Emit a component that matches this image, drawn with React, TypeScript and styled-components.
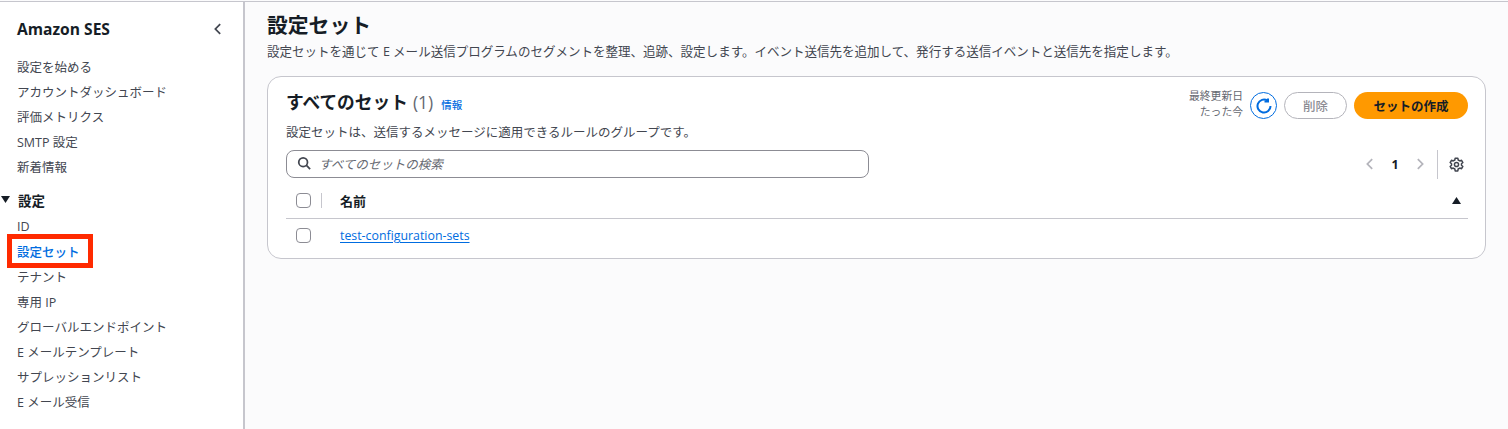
import React from 'react';
import styled, { createGlobalStyle } from 'styled-components';

const FONT = `"Open Sans", "Noto Sans CJK JP", sans-serif`;

const GlobalStyle = createGlobalStyle`
  html, body {
    margin: 0;
    padding: 0;
    height: 100%;
    overflow: hidden;
    background: #fbfbfc;
  }
  #root {
    height: 100%;
  }
  * {
    box-sizing: border-box;
  }
`;

const Page = styled.div`
  display: flex;
  height: 429px;
  border-top: 1px solid #c6c6cd;
  margin-top: 1px;
  font-family: ${FONT};
  color: #424650;
  background: #fbfbfc;
`;

const Sidebar = styled.aside`
  flex: 0 0 245px;
  background: #ffffff;
  border-right: 2px solid #c6c6cd;
  overflow: hidden;
`;

const SidebarHeader = styled.div`
  display: flex;
  align-items: center;
  justify-content: space-between;
  height: 22px;
  margin-top: 16px;
  padding: 0 18px 0 17px;
  color: #424650;
`;

const ServiceName = styled.span`
  font-size: 15.6px;
  font-weight: 700;
  color: #161d26;
`;

const NavList = styled.ul`
  list-style: none;
  margin: 0;
  padding: 0 0 0 17px;
`;

const TopNav = styled(NavList)`
  margin-top: 13.5px;
`;

const NavItem = styled.li<{ $active?: boolean }>`
  position: relative;
  display: flex;
  align-items: center;
  height: 25.1px;
  font-size: 12.5px;
  font-weight: ${(p) => (p.$active ? 500 : 400)};
  color: ${(p) => (p.$active ? '#006ce0' : '#424650')};
  white-space: nowrap;
`;

const Highlight = styled.span`
  position: absolute;
  left: -10px;
  top: -5px;
  width: 86px;
  height: 34px;
  border: 5px solid #ff2a00;
`;

const SectionTitle = styled.div`
  display: flex;
  align-items: center;
  height: 25px;
  margin: 8.5px 0 1px;
  padding-left: 1px;
  font-size: 13.5px;
  font-weight: 700;
  color: #161d26;
`;

const Caret = styled.svg`
  width: 9px;
  height: 7px;
  margin-right: 8px;
  fill: #161d26;
`;

const Main = styled.main`
  flex: 1;
  min-width: 0;
  padding: 8px 22px 0 22px;
`;

const PageTitle = styled.h1`
  margin: 0;
  font-size: 20.8px;
  line-height: 30px;
  font-weight: 700;
  color: #161d26;
`;

const PageDescription = styled.p`
  margin: 3px 0 0;
  font-size: 12.53px;
  line-height: 18px;
  color: #424650;
  white-space: nowrap;
`;

const Card = styled.section`
  margin-top: 15px;
  height: 183px;
  padding: 14px 17px 0 18px;
  background: #ffffff;
  border: 1px solid #c6c6cd;
  border-radius: 14px;
`;

const CardTop = styled.div`
  display: flex;
  justify-content: space-between;
  align-items: flex-start;
`;

const CardTitle = styled.h2`
  margin: -1px 0 0;
  display: flex;
  align-items: baseline;
  gap: 5px;
  font-size: 17.7px;
  line-height: 24px;
  font-weight: 700;
  color: #161d26;
`;

const Count = styled.span`
  font-size: 17.5px;
  font-weight: 400;
  color: #656871;
`;

const InfoLink = styled.a`
  margin-left: 3px;
  font-size: 10.5px;
  font-weight: 500;
  color: #006ce0;
`;

const Actions = styled.div`
  display: flex;
  align-items: center;
  gap: 7px;
`;

const Updated = styled.div`
  margin-top: -3px;
  font-size: 10.8px;
  line-height: 16px;
  text-align: right;
  color: #656871;
`;

const RefreshButton = styled.button`
  display: flex;
  align-items: center;
  justify-content: center;
  width: 27px;
  height: 27px;
  padding: 0;
  background: #ffffff;
  border: 1px solid #006ce0;
  border-radius: 50%;
  color: #006ce0;
`;

const PillButton = styled.button<{ $primary?: boolean }>`
  height: 27px;
  padding: 0;
  width: ${(p) => (p.$primary ? '114px' : '63px')};
  font-family: ${FONT};
  font-size: 12.5px;
  font-weight: ${(p) => (p.$primary ? 700 : 500)};
  color: ${(p) => (p.$primary ? '#161d26' : '#8c8c94')};
  background: ${(p) => (p.$primary ? '#ff9900' : '#ffffff')};
  border: ${(p) => (p.$primary ? 'none' : '1px solid #b4b4bb')};
  border-radius: 14px;
`;

const Subtitle = styled.p`
  margin: 4px 0 0;
  font-size: 12.5px;
  line-height: 17px;
  color: #424650;
`;

const ToolRow = styled.div`
  display: flex;
  align-items: center;
  justify-content: space-between;
  margin-top: 9px;
`;

const SearchBox = styled.div`
  display: flex;
  align-items: center;
  gap: 8px;
  width: 583px;
  height: 28px;
  padding: 0 0 2px 10px;
  border: 1px solid #8c8c94;
  border-radius: 8px;
  font-size: 12.5px;
  font-style: italic;
  color: #656871;
`;

const Pager = styled.div`
  display: flex;
  align-items: center;
  height: 28px;
  color: #b4b4bb;
`;

const PageNumber = styled.span`
  width: 36px;
  text-align: center;
  font-size: 12.5px;
  font-weight: 700;
  color: #161d26;
`;

const PagerDivider = styled.span`
  width: 1px;
  height: 29px;
  margin: 0 11px 0 10px;
  background: #c6c6cd;
`;

const GearIcon = styled.svg`
  display: block;
  margin-right: 4px;
  color: #424650;
`;

const HeadRow = styled.div`
  display: flex;
  align-items: center;
  height: 41px;
  padding: 5px 0 0 10px;
  border-bottom: 1px solid #c6c6cd;
`;

const BodyRow = styled.div`
  display: flex;
  align-items: center;
  height: 33px;
  padding-left: 10px;
`;

const Checkbox = styled.span`
  flex: none;
  width: 15px;
  height: 15px;
  background: #ffffff;
  border: 1px solid #8c8c94;
  border-radius: 4px;
`;

const HeadDivider = styled.span`
  width: 1px;
  height: 15px;
  margin-left: 10px;
  background: #c6c6cd;
`;

const ColumnName = styled.span`
  flex: 1;
  margin-left: 18px;
  font-size: 13px;
  font-weight: 700;
  color: #161d26;
`;

const SortCaret = styled.svg`
  width: 9px;
  height: 7px;
  margin-right: 7px;
  fill: #161d26;
`;

const RowLink = styled.a`
  margin-left: 29px;
  font-size: 12.35px;
  font-weight: 500;
  color: #006ce0;
  text-decoration: underline;
  text-underline-offset: 2px;
`;

const topNav = ['設定を始める', 'アカウントダッシュボード', '評価メトリクス', 'SMTP 設定', '新着情報'];
const settingsNav = ['ID', '設定セット', 'テナント', '専用 IP', 'グローバルエンドポイント', 'E メールテンプレート', 'サプレッションリスト', 'E メール受信'];

const Chevron = ({ dir, size = 14 }: { dir: 'left' | 'right'; size?: number }) => (
  <svg width={size} height={size} viewBox="0 0 16 16" fill="none" stroke="currentColor" strokeWidth={2} style={{ display: 'block' }}>
    <path d={dir === 'left' ? 'M10.5 2.5 5 8l5.5 5.5' : 'M5.5 2.5 11 8l-5.5 5.5'} />
  </svg>
);

const App = () => (
  <>
    <GlobalStyle />
    <Page>
      <Sidebar>
        <SidebarHeader>
          <ServiceName>Amazon SES</ServiceName>
          <Chevron dir="left" />
        </SidebarHeader>
        <TopNav>
          {topNav.map((label) => (
            <NavItem key={label}>{label}</NavItem>
          ))}
        </TopNav>
        <SectionTitle>
          <Caret viewBox="0 0 9 7">
            <path d="M0 0h9L4.5 7z" />
          </Caret>
          設定
        </SectionTitle>
        <NavList>
          {settingsNav.map((label) => (
            <NavItem key={label} $active={label === '設定セット'}>
              {label}
              {label === '設定セット' && <Highlight />}
            </NavItem>
          ))}
        </NavList>
      </Sidebar>
      <Main>
        <PageTitle>設定セット</PageTitle>
        <PageDescription>
          設定セットを通じて E メール送信プログラムのセグメントを整理、追跡、設定します。イベント送信先を追加して、発行する送信イベントと送信先を指定します。
        </PageDescription>
        <Card>
          <CardTop>
            <CardTitle>
              すべてのセット <Count>(1)</Count>
              <InfoLink>情報</InfoLink>
            </CardTitle>
            <Actions>
              <Updated>
                最終更新日
                <br />
                たった今
              </Updated>
              <RefreshButton aria-label="更新">
                <svg width="16" height="16" viewBox="0 0 16 16" fill="none" stroke="currentColor" strokeWidth="2">
                  <path d="M14.500 8A6.500 6.500 0 1 1 11.500 2.600" />
                  <path d="M12 0.500V3.500H8.500" />
                </svg>
              </RefreshButton>
              <PillButton>削除</PillButton>
              <PillButton $primary>セットの作成</PillButton>
            </Actions>
          </CardTop>
          <Subtitle>設定セットは、送信するメッセージに適用できるルールのグループです。</Subtitle>
          <ToolRow>
            <SearchBox>
              <svg width="14" height="14" viewBox="0 0 16 16" fill="none" stroke="#424650" strokeWidth="2">
                <circle cx="7" cy="7" r="5" />
                <path d="m10.5 10.5 4.5 4.5" />
              </svg>
              すべてのセットの検索
            </SearchBox>
            <Pager>
              <Chevron dir="left" />
              <PageNumber>1</PageNumber>
              <Chevron dir="right" />
              <PagerDivider />
              <GearIcon width="15" height="15" viewBox="0 0 16 16" fill="none" stroke="currentColor" strokeWidth="1.6">
                <path d="M6.6 1.2h2.800l.4 2 1.700 1 1.900-.7 1.400 2.400-1.500 1.300v1.600l1.500 1.300-1.400 2.400-1.900-.7-1.700 1-.4 2H6.600l-.4-2-1.700-1-1.900.7-1.400-2.400 1.500-1.300V7.200L1.200 5.900l1.400-2.400 1.900.7 1.700-1z" strokeLinejoin="round" />
                <circle cx="8" cy="8" r="2.200" />
              </GearIcon>
            </Pager>
          </ToolRow>
          <HeadRow>
            <Checkbox />
            <HeadDivider />
            <ColumnName>名前</ColumnName>
            <SortCaret viewBox="0 0 9 7">
              <path d="M0 7h9L4.500 0z" />
            </SortCaret>
          </HeadRow>
          <BodyRow>
            <Checkbox />
            <RowLink>test-configuration-sets</RowLink>
          </BodyRow>
        </Card>
      </Main>
    </Page>
  </>
);

export default App;
